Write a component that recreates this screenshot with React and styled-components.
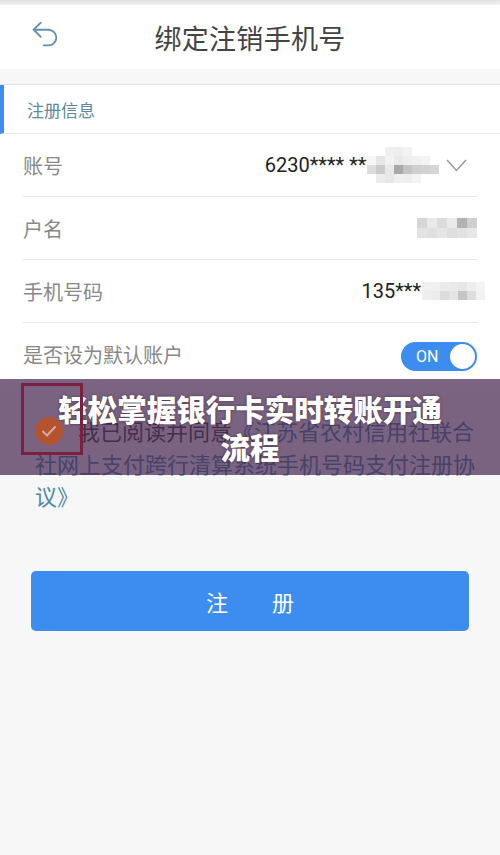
import styled, { createGlobalStyle } from "styled-components"
import { Undo2 } from "lucide-react"

const GlobalStyle = createGlobalStyle`
  html, body {
    margin: 0;
    padding: 0;
    background: #f7f7f8;
  }
  body {
    font-family: "Noto Sans CJK SC", "Noto Sans", sans-serif;
  }
`

// little pixelated blocks that hide part of a value
const Mosaic = ({ cells, size = 9 }) => {
  const rows = cells.length
  const cols = cells[0].length
  return (
    <svg width={cols * size} height={rows * size} viewBox={`0 0 ${cols * size} ${rows * size}`}>
      {cells.map((row, r) =>
        row.map((c, i) => (c ? <rect key={r + "-" + i} x={i * size} y={r * size} width={size} height={size} fill={c} /> : null))
      )}
    </svg>
  )
}

const accountCells = [
  [null, null, "#f0f0f0", "#eeeeee", "#f2f2f2", null, null, null],
  ["#f6f6f6", "#e6e6e6", "#f1f1f1", "#e9e9e9", "#eeeeee", "#f1f1f1", "#f3f3f3", null],
  ["#dcdcdc", "#cbcbcb", "#e8e8e8", "#a9a9a9", "#c4c4c4", "#cfcfcf", "#d2d2d2", "#d6d6d6"],
  [null, "#ececec", "#e7e7e7", "#f0f0f0", "#eeeeee", "#f4f4f4", null, null],
]

const nameCells = [
  ["#d6d6d6", "#e9e9e9", "#dcdcdc", "#eaeaea", "#b2b2b2", "#cfcfcf"],
  ["#e3e3e3", "#e0e0e0", "#e6e6e6", "#dedede", "#e2e2e2", "#e7e7e7"],
]

const phoneCells = [
  ["#f0f0f0", "#f1f1f1", "#ececec", "#e9e9e9", "#e6e6e6", "#eeeeee", "#f4f4f4"],
  ["#eeeeee", "#ebebeb", "#dcdcdc", "#e4e4e4", "#c5c5c5", "#dddddd", "#f2f2f2"],
]

const App = () => {
  return (
    <Page>
      <GlobalStyle />
      <StatusStrip />
      <Header>
        <BackBtn>
          <Undo2 size={34} strokeWidth={1.3} />
        </BackBtn>
        <Title>绑定注销手机号</Title>
      </Header>

      <Card>
        <SectionHead>注册信息</SectionHead>
        <Row>
          <Label>账号</Label>
          <Value $tuck>
            <Digits>6230**** ***</Digits>
            <Mosaic cells={accountCells} size={9} />
            <Chevron width="21" height="13" viewBox="0 0 21 13">
              <polyline points="1,1 10.5,11.5 20,1" fill="none" stroke="#9a9a9a" strokeWidth="1.5" />
            </Chevron>
          </Value>
        </Row>
        <Row>
          <Label>户名</Label>
          <Value>
            <Mosaic cells={nameCells} size={10} />
          </Value>
        </Row>
        <Row>
          <Label>手机号码</Label>
          <Value $overhang>
            <Digits>135***</Digits>
            <Mosaic cells={phoneCells} size={9} />
          </Value>
        </Row>
        <Row $last>
          <Label>是否设为默认账户</Label>
          <Toggle>
            <span>ON</span>
            <Knob />
          </Toggle>
        </Row>
      </Card>

      <Agreement>
        <Check>
          <svg width="28" height="28" viewBox="0 0 28 28">
            <circle cx="14" cy="14" r="14" fill="#b3532f" />
            <path d="M8 14.5l4 4 8-8.5" fill="none" stroke="#d9ab98" strokeWidth="2" strokeLinecap="round" strokeLinejoin="round" />
          </svg>
          <Marker />
        </Check>
        我已阅读并同意<LinkText>《江苏省农村信用社联合社网上支付跨行清算系统手机号码支付注册协议》</LinkText>
      </Agreement>

      <SubmitWrap>
        <Submit>注　　册</Submit>
      </SubmitWrap>

      <Banner>
        <BannerText>轻松掌握银行卡实时转账开通流程</BannerText>
      </Banner>
    </Page>
  )
}

export default App

const Page = styled.div`
  position: relative;
  width: 500px;
  min-height: 855px;
  background: #f7f7f8;
  display: flex;
  flex-direction: column;
  overflow: hidden;
`

const StatusStrip = styled.div`
  height: 5px;
  background: linear-gradient(#e2e2e2, #f3f3f3);
`

const Header = styled.div`
  height: 64px;
  background: #fff;
  display: flex;
  align-items: center;
  justify-content: center;
  position: relative;
  margin-bottom: 15px;
`

const BackBtn = styled.div`
  position: absolute;
  left: 28px;
  top: 12px;
  color: #5f93ad;
  display: flex;
`

const Title = styled.div`
  font-size: 27px;
  color: #444;
  letter-spacing: 0.3px;
`

const Card = styled.div`
  background: #fff;
  border-top: 1px solid #e2e2e2;
`

const SectionHead = styled.div`
  height: 48px;
  display: flex;
  align-items: center;
  font-size: 17px;
  color: #5b8aa0;
  border-left: 4px solid #3d8cf0;
  border-bottom: 1px solid #e6e6e6;
  padding-left: 23px;
`

const Row = styled.div`
  height: 62px;
  margin: 0 23px;
  display: flex;
  align-items: center;
  justify-content: space-between;
  border-bottom: ${(p) => (p.$last ? "none" : "1px solid #e8e8e8")};
`

const Label = styled.div`
  font-size: 20px;
  color: #888;
`

const Value = styled.div`
  display: flex;
  align-items: center;
  margin-right: ${(p) => (p.$overhang ? "-8px" : "0")};

  svg {
    flex-shrink: 0;
  }

  ${(p) => p.$tuck && `span + svg { margin-left: -9px; }`}
`

const Digits = styled.span`
  font-family: Roboto, "Noto Sans CJK SC", sans-serif;
  font-size: 20px;
  color: #222;
  margin-right: 1px;
`

const Chevron = styled.svg`
  margin-left: 7px;
  margin-right: 10px;
`

const Toggle = styled.div`
  width: 76px;
  height: 29px;
  border-radius: 15px;
  background: #3d8cf0;
  box-sizing: border-box;
  padding: 0 2px 0 15px;
  display: flex;
  align-items: center;
  justify-content: space-between;
  margin-top: 5px;

  span {
    font-family: Roboto, sans-serif;
    font-size: 16px;
    color: #fff;
  }
`

const Knob = styled.div`
  width: 25px;
  height: 25px;
  border-radius: 50%;
  background: #fff;
`

const Agreement = styled.div`
  margin-top: 29px;
  padding: 0 21px 0 35px;
  font-size: 22px;
  line-height: 32.5px;
  color: #4a4a4a;
`

const LinkText = styled.span`
  color: #4c8aa6;
`

const Check = styled.span`
  position: relative;
  z-index: 2;
  display: inline-block;
  vertical-align: -5px;
  width: 28px;
  height: 28px;
  margin-right: 15px;

  svg {
    display: block;
  }
`

// dark outline drawn round the checkbox
const Marker = styled.span`
  position: absolute;
  left: -14px;
  top: -34px;
  width: 62px;
  height: 72px;
  box-sizing: border-box;
  border: 3px solid #7d1f3e;
`

const SubmitWrap = styled.div`
  padding: 59px 31px 0;
`

const Submit = styled.button`
  width: 100%;
  height: 60px;
  border: none;
  border-radius: 5px;
  background: #3d8cf0;
  color: #fff;
  font-family: "Noto Sans CJK SC", sans-serif;
  font-size: 22px;
`

const Banner = styled.div`
  position: absolute;
  left: 0;
  top: 379px;
  width: 100%;
  height: 96px;
  background: rgba(69, 36, 78, 0.7);
  z-index: 1;
  display: flex;
  align-items: center;
  justify-content: center;
`

const BannerText = styled.div`
  width: 400px;
  text-align: center;
  font-size: 29.5px;
  font-weight: 900;
  line-height: 38px;
  color: #fff;
  text-shadow: 0 0 3px rgba(40, 20, 40, 0.6);
`
